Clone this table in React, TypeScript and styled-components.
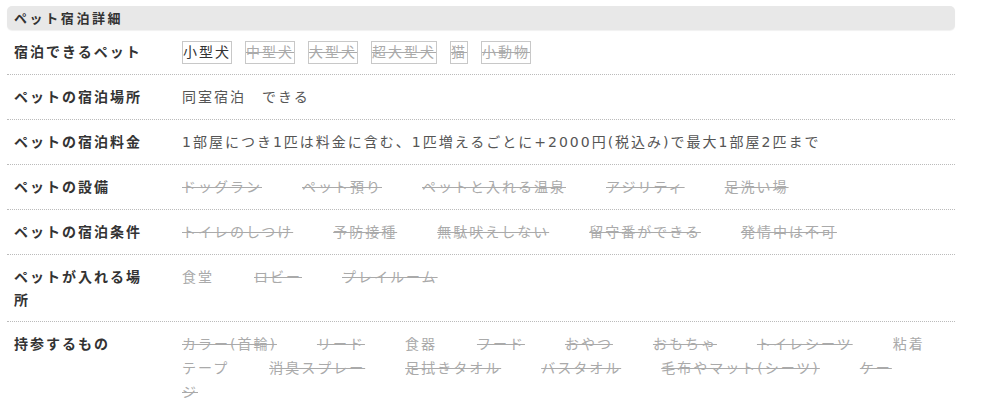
import React from 'react';
import styled, { createGlobalStyle } from 'styled-components';

const GlobalStyle = createGlobalStyle`
  body {
    margin: 0;
    background: #fff;
    font-family: "Noto Sans CJK JP", "Noto Sans", sans-serif;
  }
`;

const Wrapper = styled.section`
  width: 948px;
  padding: 6px 0 0 7px;
`;

const Heading = styled.h3`
  margin: 0;
  height: 24px;
  line-height: 24px;
  padding: 0 7px;
  background: #e8e8e8;
  border-radius: 5px;
  box-shadow: 0 1px 1px rgba(0, 0, 0, 0.06);
  font-size: 13px;
  font-weight: bold;
  letter-spacing: 2.6px;
  color: #333;
`;

const Row = styled.div`
  display: grid;
  grid-template-columns: 175px 1fr;
  padding: 10px 0;
  border-bottom: 1px dotted #bbb;

  &:last-child {
    border-bottom: none;
  }
`;

const Label = styled.div`
  padding: 0 33px 0 7px;
  font-size: 14px;
  font-weight: bold;
  letter-spacing: 2px;
  line-height: 23px;
  color: #333;
`;

const Value = styled.div`
  padding-right: 22px;
  font-family: "DejaVu Sans", "Noto Sans CJK JP", sans-serif;
  font-size: 14px;
  letter-spacing: 2px;
  line-height: 24px;
  color: #555;
`;

const Tag = styled.span<{ $off?: boolean }>`
  display: inline-block;
  margin-right: 13px;
  border: 1px solid #c8c8c8;
  line-height: 21px;
  color: ${(p) => (p.$off ? '#aaa' : '#333')};
  text-decoration: ${(p) => (p.$off ? 'line-through' : 'none')};
`;

const Item = styled.span<{ $off?: boolean }>`
  margin-right: 40px;
  color: #aaa;
  text-decoration: ${(p) => (p.$off ? 'line-through' : 'none')};
`;

type Entry = [string, boolean];

const petTypes: Entry[] = [
  ['小型犬', false],
  ['中型犬', true],
  ['大型犬', true],
  ['超大型犬', true],
  ['猫', true],
  ['小動物', true],
];

const facilities: Entry[] = [
  ['ドッグラン', true],
  ['ペット預り', true],
  ['ペットと入れる温泉', true],
  ['アジリティ', true],
  ['足洗い場', true],
];

const conditions: Entry[] = [
  ['トイレのしつけ', true],
  ['予防接種', true],
  ['無駄吠えしない', true],
  ['留守番ができる', true],
  ['発情中は不可', true],
];

const places: Entry[] = [
  ['食堂', false],
  ['ロビー', true],
  ['プレイルーム', true],
];

const belongings: Entry[] = [
  ['カラー(首輪)', true],
  ['リード', true],
  ['食器', false],
  ['フード', true],
  ['おやつ', true],
  ['おもちゃ', true],
  ['トイレシーツ', true],
  ['粘着テープ', false],
  ['消臭スプレー', true],
  ['足拭きタオル', true],
  ['バスタオル', true],
  ['毛布やマット(シーツ)', true],
  ['ケージ', true],
];

const ItemList = ({ items }: { items: Entry[] }) => (
  <Value>
    {items.map(([name, off]) => (
      <Item key={name} $off={off}>
        {name}
      </Item>
    ))}
  </Value>
);

export default function App() {
  return (
    <Wrapper>
      <GlobalStyle />
      <Heading>ペット宿泊詳細</Heading>
      <Row>
        <Label>宿泊できるペット</Label>
        <Value>
          {petTypes.map(([name, off]) => (
            <Tag key={name} $off={off}>
              {name}
            </Tag>
          ))}
        </Value>
      </Row>
      <Row>
        <Label>ペットの宿泊場所</Label>
        <Value>同室宿泊　できる</Value>
      </Row>
      <Row>
        <Label>ペットの宿泊料金</Label>
        <Value>1部屋につき1匹は料金に含む、1匹増えるごとに+2000円(税込み)で最大1部屋2匹まで</Value>
      </Row>
      <Row>
        <Label>ペットの設備</Label>
        <ItemList items={facilities} />
      </Row>
      <Row>
        <Label>ペットの宿泊条件</Label>
        <ItemList items={conditions} />
      </Row>
      <Row>
        <Label>ペットが入れる場所</Label>
        <ItemList items={places} />
      </Row>
      <Row>
        <Label>持参するもの</Label>
        <ItemList items={belongings} />
      </Row>
    </Wrapper>
  );
}
